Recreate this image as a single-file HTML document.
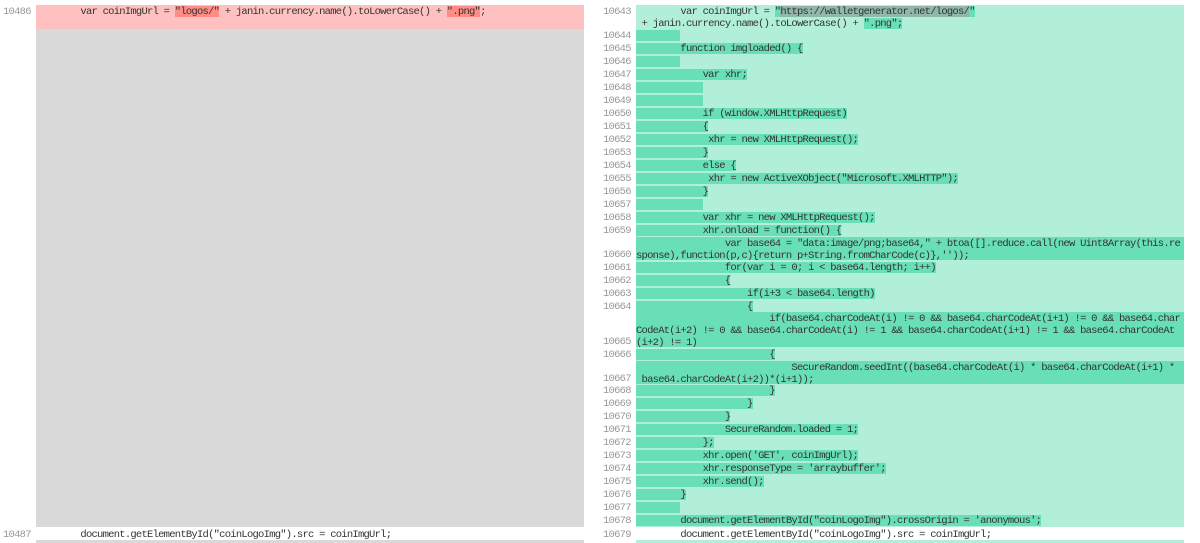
<!DOCTYPE html>
<html lang="en"><head><meta charset="utf-8"><title>Diff</title>
<style>
html,body{margin:0;padding:0;width:1200px;height:543px;overflow:hidden;background:#fff}
body{position:relative;font:10.5px/13px "Liberation Mono","DejaVu Sans Mono",monospace;letter-spacing:-.75px;color:#333}
.a{position:absolute}
.n{position:absolute;color:#999;white-space:pre;height:11px}
.l{left:3px}.m{left:603px}
.r{position:absolute;left:636px;height:11px;background:#69dfb8;white-space:pre}
.w{position:absolute;left:636px;width:548px;box-sizing:border-box;padding-top:1px;background:#69dfb8;white-space:pre;line-height:12px}
.p{position:absolute;white-space:pre}
.o{background:#69dfb8}.g{background:#8fb8a8}.x{background:#ff8d85}
.o,.g,.x{display:inline-block;height:11px;line-height:13px;vertical-align:top}
</style></head><body>
<div class="a" style="left:36px;top:5px;width:548px;height:24px;background:#ffc0c0"></div>
<div class="a" style="left:36px;top:29px;width:548px;height:498px;background:#d9d9d9"></div>
<div class="a" style="left:36px;top:540px;width:548px;height:3px;background:#d9d9d9"></div>
<div class="a" style="left:636px;top:5px;width:548px;height:522px;background:#b2efd9"></div>
<div class="a" style="left:636px;top:540px;width:548px;height:3px;background:#b2efd9"></div>

<div class="n l" style="top:-8px">10485</div>
<div class="n m" style="top:-8px">10642</div>
<div class="n l" style="top:6px">10486</div>
<div class="p" style="left:36px;top:6px">        var coinImgUrl = <span class="x">"logos/"</span> + janin.currency.name().toLowerCase() + <span class="x">".png"</span>;</div>
<div class="n l" style="top:529px">10487</div>
<div class="p" style="left:36px;top:529px">        document.getElementById("coinLogoImg").src = coinImgUrl;</div>

<div class="n m" style="top:6px">10643</div>
<div class="p" style="left:636px;top:6px;line-height:12px">        var coinImgUrl = <span class="o">"<span class="g">https://walletgenerator.net/logos/</span>"</span>
 + janin.currency.name().toLowerCase() + <span class="o">".png";</span></div>

<div class="n m" style="top:30px">10644</div><div class="r" style="top:30px">        </div>
<div class="n m" style="top:43px">10645</div><div class="r" style="top:43px">        function imgloaded() {</div>
<div class="n m" style="top:56px">10646</div><div class="r" style="top:56px">        </div>
<div class="n m" style="top:69px">10647</div><div class="r" style="top:69px">            var xhr;</div>
<div class="n m" style="top:82px">10648</div><div class="r" style="top:82px">            </div>
<div class="n m" style="top:95px">10649</div><div class="r" style="top:95px">            </div>
<div class="n m" style="top:108px">10650</div><div class="r" style="top:108px">            if (window.XMLHttpRequest)</div>
<div class="n m" style="top:121px">10651</div><div class="r" style="top:121px">            {</div>
<div class="n m" style="top:134px">10652</div><div class="r" style="top:134px">             xhr = new XMLHttpRequest();</div>
<div class="n m" style="top:147px">10653</div><div class="r" style="top:147px">            }</div>
<div class="n m" style="top:160px">10654</div><div class="r" style="top:160px">            else {</div>
<div class="n m" style="top:173px">10655</div><div class="r" style="top:173px">             xhr = new ActiveXObject("Microsoft.XMLHTTP");</div>
<div class="n m" style="top:186px">10656</div><div class="r" style="top:186px">            }</div>
<div class="n m" style="top:199px">10657</div><div class="r" style="top:199px">            </div>
<div class="n m" style="top:212px">10658</div><div class="r" style="top:212px">            var xhr = new XMLHttpRequest();</div>
<div class="n m" style="top:225px">10659</div><div class="r" style="top:225px">            xhr.onload = function() {</div>
<div class="n m" style="top:249px">10660</div><div class="w" style="top:237px;height:23px">                var base64 = "data:image/png;base64," + btoa([].reduce.call(new Uint8Array(this.re
sponse),function(p,c){return p+String.fromCharCode(c)},''));</div>
<div class="n m" style="top:262px">10661</div><div class="r" style="top:262px">                for(var i = 0; i &lt; base64.length; i++)</div>
<div class="n m" style="top:275px">10662</div><div class="r" style="top:275px">                {</div>
<div class="n m" style="top:288px">10663</div><div class="r" style="top:288px">                    if(i+3 &lt; base64.length)</div>
<div class="n m" style="top:301px">10664</div><div class="r" style="top:301px">                    {</div>
<div class="n m" style="top:336px">10665</div><div class="w" style="top:312px;height:35px">                        if(base64.charCodeAt(i) != 0 &amp;&amp; base64.charCodeAt(i+1) != 0 &amp;&amp; base64.char
CodeAt(i+2) != 0 &amp;&amp; base64.charCodeAt(i) != 1 &amp;&amp; base64.charCodeAt(i+1) != 1 &amp;&amp; base64.charCodeAt
(i+2) != 1)</div>
<div class="n m" style="top:349px">10666</div><div class="r" style="top:349px">                        {</div>
<div class="n m" style="top:373px">10667</div><div class="w" style="top:361px;height:23px">                            SecureRandom.seedInt((base64.charCodeAt(i) * base64.charCodeAt(i+1) *
 base64.charCodeAt(i+2))*(i+1));</div>
<div class="n m" style="top:385px">10668</div><div class="r" style="top:385px">                        }</div>
<div class="n m" style="top:398px">10669</div><div class="r" style="top:398px">                    }</div>
<div class="n m" style="top:411px">10670</div><div class="r" style="top:411px">                }</div>
<div class="n m" style="top:424px">10671</div><div class="r" style="top:424px">                SecureRandom.loaded = 1;</div>
<div class="n m" style="top:437px">10672</div><div class="r" style="top:437px">            };</div>
<div class="n m" style="top:450px">10673</div><div class="r" style="top:450px">            xhr.open('GET', coinImgUrl);</div>
<div class="n m" style="top:463px">10674</div><div class="r" style="top:463px">            xhr.responseType = 'arraybuffer';</div>
<div class="n m" style="top:476px">10675</div><div class="r" style="top:476px">            xhr.send();</div>
<div class="n m" style="top:489px">10676</div><div class="r" style="top:489px">        }</div>
<div class="n m" style="top:502px">10677</div><div class="r" style="top:502px">        </div>
<div class="n m" style="top:515px">10678</div><div class="r" style="top:515px">        document.getElementById("coinLogoImg").crossOrigin = 'anonymous';</div>
<div class="n m" style="top:529px">10679</div>
<div class="p" style="left:636px;top:529px">        document.getElementById("coinLogoImg").src = coinImgUrl;</div>
</body></html>
